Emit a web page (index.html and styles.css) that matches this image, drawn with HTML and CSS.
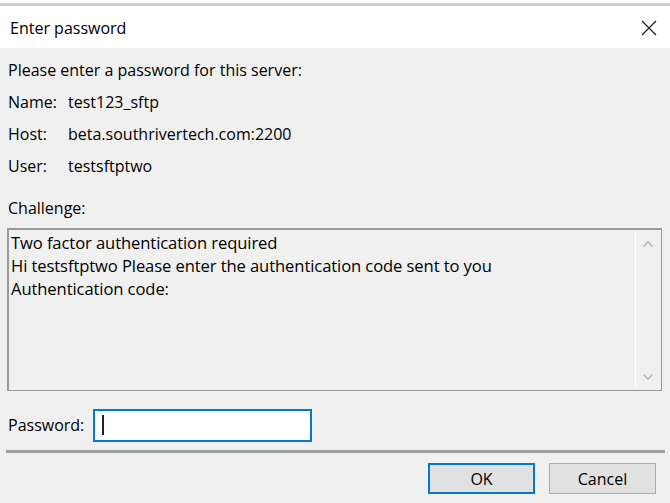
FILE: index.html
```html
<!DOCTYPE html>
<html>
<head>
<meta charset="utf-8">
<link rel="stylesheet" href="styles.css">
</head>
<body>
<div class="dialog">
  <div class="topgap"></div>
  <div class="titlebar">
    <span class="title">Enter password</span>
    <svg class="close" width="16" height="16" viewBox="0 0 16 16"><path d="M1 1L15 15M15 1L1 15" stroke="#222" stroke-width="1.3" fill="none"/></svg>
  </div>
  <div class="content">
    <div class="line intro">Please enter a password for this server:</div>
    <div class="line info"><span class="lbl">Name:</span><span>test123_sftp</span></div>
    <div class="line info"><span class="lbl">Host:</span><span>beta.southrivertech.com:2200</span></div>
    <div class="line info"><span class="lbl">User:</span><span>testsftptwo</span></div>
    <div class="line challenge">Challenge:</div>
    <div class="textbox">
      <div class="tbtext">
        <div>Two factor authentication required</div>
        <div>Hi testsftptwo Please enter the authentication code sent to you</div>
        <div>Authentication code:</div>
      </div>
      <div class="scroll">
        <svg width="12" height="8" viewBox="0 0 12 8"><path d="M1.5 6.5L6 2L10.5 6.5" stroke="#b8b8b8" stroke-width="1.6" fill="none"/></svg>
        <svg width="12" height="8" viewBox="0 0 12 8"><path d="M1.5 1.5L6 6L10.5 1.5" stroke="#b8b8b8" stroke-width="1.6" fill="none"/></svg>
      </div>
    </div>
    <div class="pwrow">
      <span class="pwlabel">Password:</span>
      <div class="pwinput"><span class="caret"></span></div>
    </div>
  </div>
  <div class="sep"></div>
  <div class="buttons">
    <button class="btn ok">OK</button>
    <button class="btn">Cancel</button>
  </div>
</div>
</body>
</html>
```
FILE: styles.css
```css
html, body {
  margin: 0;
  padding: 0;
}
body {
  width: 670px;
  height: 503px;
  background: #f0f0f0;
  font-family: "Open Sans", "Noto Sans", sans-serif;
  color: #000;
  overflow: hidden;
}
.dialog {
  display: flex;
  flex-direction: column;
  height: 503px;
}
.topgap {
  height: 3px;
  background: #ffffff;
  border-bottom: 3px solid #cdcdcd;
}
.titlebar {
  height: 42px;
  background: #ffffff;
  display: flex;
  align-items: center;
  justify-content: space-between;
  padding: 0 13px 0 10px;
}
.title {
  font-size: 16px;
  color: #000;
  margin-top: 1px;
}
.close {
  display: block;
  margin-top: 2px;
}
.content {
  padding: 0 8px 0 8px;
  font-size: 16px;
  color: #000;
  display: flex;
  flex-direction: column;
}
.line {
  height: 32px;
  line-height: 32px;
  white-space: nowrap;
}
.intro {
  margin-top: 6px;
}
.info {
  display: flex;
}
.lbl {
  width: 60px;
}
.challenge {
  margin-top: 10px;
}
.textbox {
  margin: 4px 0 0 -1px;
  border: 1px solid #9a9a9a;
  box-shadow: inset 1px 1px 0 #9a9a9a;
  width: 655px;
  display: flex;
  box-sizing: border-box;
  height: 163px;
}
.tbtext {
  flex: 1;
  padding: 2px 0 0 3px;
  line-height: 23px;
  font-size: 16.6px;
  white-space: nowrap;
  letter-spacing: -0.1px;
}
.scroll {
  width: 23px;
  border-left: 1px solid #ffffff;
  margin: 2px 2px 2px 0;
  display: flex;
  flex-direction: column;
  justify-content: space-between;
  align-items: center;
  padding: 9px 0 7px;
}
.scroll svg {
  display: block;
}
.pwrow {
  margin-top: 17px;
  display: flex;
  align-items: center;
  height: 34px;
}
.pwlabel {
  width: 85px;
}
.pwinput {
  width: 219px;
  height: 33px;
  box-sizing: border-box;
  border: 2px solid #0078d7;
  background: #ffffff;
  display: flex;
  align-items: center;
  padding-left: 7px;
}
.caret {
  width: 2px;
  height: 20px;
  background: #222;
}
.sep {
  margin: 8px 5px 0 6px;
  height: 3px;
  background: #a0a0a0;
}
.buttons {
  display: flex;
  justify-content: flex-end;
  gap: 14px;
  padding: 10px 14px 0 0;
}
.btn {
  width: 107px;
  height: 31px;
  box-sizing: border-box;
  background: #e1e1e1;
  border: 1px solid #adadad;
  font-family: "Open Sans", "Noto Sans", sans-serif;
  font-size: 16px;
  color: #000;
  padding: 0;
}
.btn.ok {
  border: 2px solid #0078d7;
}
```
